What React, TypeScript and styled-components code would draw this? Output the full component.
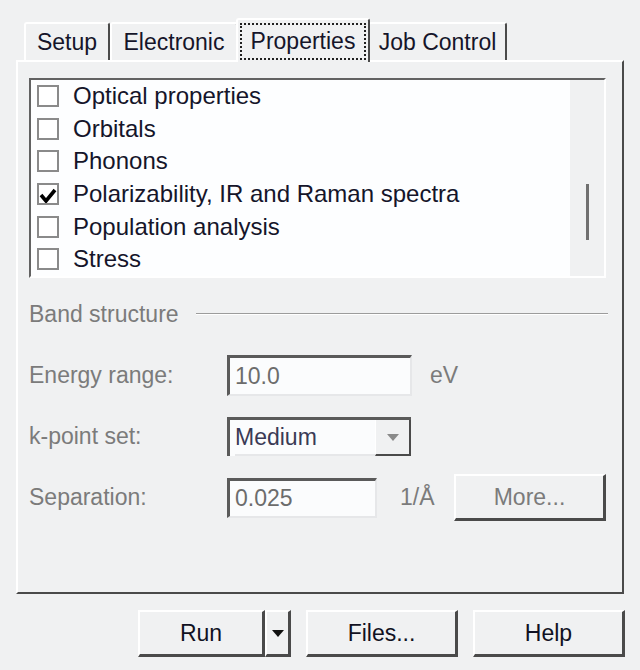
import React from "react";
import styled, { createGlobalStyle } from "styled-components";

const GlobalStyle = createGlobalStyle`
  html, body {
    margin: 0;
    padding: 0;
    background: #f0f0f0;
  }
`;

const dark = "#4a4a4a";
const disabled = "#7b7b7b";

const Window = styled.div`
  width: 640px;
  height: 670px;
  box-sizing: border-box;
  padding: 16px 16px 0 16px;
  background: #f0f1f2;
  display: flex;
  flex-direction: column;
  font-family: "Liberation Sans", Arial, sans-serif;
  color: #15152a;
`;

const TabStrip = styled.div`
  display: flex;
  align-items: flex-end;
  height: 46px;
  padding-left: 8px;
  margin-bottom: -2px;
  position: relative;
  z-index: 1;
`;

const Tab = styled.div<{ $w: number; $active?: boolean }>`
  box-sizing: border-box;
  width: ${(p) => p.$w}px;
  height: ${(p) => (p.$active ? 44 : 38)}px;
  margin: ${(p) => (p.$active ? "0 -2px" : "0 0 2px 0")};
  background: #f0f1f2;
  border-top: 2px solid #ffffff;
  border-left: 2px solid #ffffff;
  border-right: 2px solid ${dark};
  border-radius: 3px 3px 0 0;
  display: flex;
  align-items: ${(p) => (p.$active ? "flex-start" : "center")};
  justify-content: center;
  padding-top: ${(p) => (p.$active ? "3px" : "1px")};
  font-size: 23px;
  position: relative;
  z-index: ${(p) => (p.$active ? 2 : 1)};
`;

const FocusRect = styled.span`
  display: block;
  box-sizing: border-box;
  border: 2px dotted #202020;
  padding: 2px 9px 3px;
  line-height: 28px;
`;

const Panel = styled.div`
  box-sizing: border-box;
  height: 534px;
  border-top: 2px solid #ffffff;
  border-left: 2px solid #ffffff;
  border-right: 2px solid ${dark};
  border-bottom: 2px solid ${dark};
  padding: 16px 16px 0 11px;
  display: flex;
  flex-direction: column;
`;

const ListBox = styled.div`
  box-sizing: border-box;
  height: 200px;
  display: flex;
  background: #fdfeff;
  border-style: solid;
  border-width: 2px;
  border-color: #626262 #ffffff #ffffff #626262;
`;

const List = styled.div`
  flex: 1;
  overflow: hidden;
`;

const Row = styled.div`
  height: 32.6px;
  display: flex;
  align-items: center;
  padding-left: 6px;
  gap: 14px;
  font-size: 24px;
  white-space: nowrap;
`;

const Box = styled.span`
  box-sizing: border-box;
  width: 22px;
  height: 22px;
  border: 2px solid #8a8a8a;
  background: #fff;
  display: flex;
  align-items: flex-end;
  justify-content: center;
  flex-shrink: 0;
`;

const ScrollTrack = styled.div`
  width: 34px;
  background: #f0f1f2;
  display: flex;
  flex-direction: column;
  align-items: center;
  padding-top: 104px;
`;

const Thumb = styled.div`
  width: 3px;
  height: 56px;
  background: #707070;
`;

const GroupHeader = styled.div`
  display: flex;
  align-items: center;
  height: 30px;
  margin-top: 21px;
  margin-right: -2px;
  font-size: 23px;
  color: ${disabled};
`;

const Rule = styled.div`
  flex: 1;
  margin-left: 17px;
  border-top: 1px solid #9c9c9c;
  border-bottom: 1px solid #ffffff;
`;

const Form = styled.div`
  display: flex;
  flex-direction: column;
  gap: 20px;
  margin-top: 26px;
`;

const FormRow = styled.div`
  display: flex;
  align-items: center;
  height: 41px;
`;

const Label = styled.div`
  width: 198px;
  font-size: 23px;
  color: ${disabled};
`;

const Field = styled.div<{ $w: number; $h?: number; $combo?: boolean }>`
  box-sizing: border-box;
  width: ${(p) => p.$w}px;
  height: ${(p) => p.$h ?? 41}px;
  background: #fbfcfd;
  border-style: solid;
  border-width: ${(p) => (p.$combo ? "3px 0 0 3px" : "3px 2px 2px 3px")};
  border-color: #5a5a5a #e6e7e9 #e6e7e9 #5a5a5a;
  display: flex;
  align-items: center;
  padding-left: 5px;
  font-size: 23px;
  color: #6c6c6c;
`;

const ComboText = styled.div`
  flex: 1;
  color: #3a3a55;
  border-bottom: 2px solid #e6e7e9;
  align-self: stretch;
  display: flex;
  align-items: center;
`;

const ComboButton = styled.div`
  box-sizing: border-box;
  width: 36px;
  height: 100%;
  background: #f0f1f2;
  border-style: solid;
  border-width: 0 2px 2px 1px;
  border-color: ${dark} ${dark} ${dark} #ffffff;
  display: flex;
  align-items: center;
  justify-content: center;
`;

const Unit = styled.div<{ $gap: number }>`
  margin-left: ${(p) => p.$gap}px;
  font-size: 23px;
  color: ${disabled};
`;

const Button = styled.button<{ $w: number; $disabled?: boolean }>`
  box-sizing: border-box;
  width: ${(p) => p.$w}px;
  height: 47px;
  padding: 0;
  background: #f0f1f2;
  border-style: solid;
  border-width: 2px 3px 3px 2px;
  border-color: #ffffff ${dark} ${dark} #ffffff;
  border-radius: 0;
  font-family: inherit;
  font-size: 23px;
  color: ${(p) => (p.$disabled ? disabled : "#111122")};
  display: flex;
  align-items: center;
  justify-content: center;
`;

const MoreButton = styled(Button)`
  margin-left: auto;
`;

const ButtonBar = styled.div`
  display: flex;
  justify-content: flex-end;
  gap: 15px;
  margin-top: 16px;
  margin-right: -1px;
`;

const SplitGroup = styled.div`
  display: flex;
`;

const Check = () => (
  <svg width="18" height="16" viewBox="0 0 18 16">
    <path d="M2 8 L7 14 L16 3" fill="none" stroke="#000" strokeWidth="3.6" />
  </svg>
);

const Down = ({ color }: { color: string }) => (
  <svg width="12" height="7" viewBox="0 0 12 7">
    <path d="M0 0 H12 L6 7 Z" fill={color} />
  </svg>
);

const items = [
  { label: "Optical properties", checked: false },
  { label: "Orbitals", checked: false },
  { label: "Phonons", checked: false },
  { label: "Polarizability, IR and Raman spectra", checked: true },
  { label: "Population analysis", checked: false },
  { label: "Stress", checked: false },
];

const App = () => {
  return (
    <Window>
      <GlobalStyle />
      <TabStrip>
        <Tab $w={86}>Setup</Tab>
        <Tab $w={128}>Electronic</Tab>
        <Tab $w={134} $active>
          <FocusRect>Properties</FocusRect>
        </Tab>
        <Tab $w={139}>Job Control</Tab>
      </TabStrip>
      <Panel>
        <ListBox>
          <List>
            {items.map((it) => (
              <Row key={it.label}>
                <Box>{it.checked && <Check />}</Box>
                {it.label}
              </Row>
            ))}
          </List>
          <ScrollTrack>
            <Thumb />
          </ScrollTrack>
        </ListBox>

        <GroupHeader>
          Band structure
          <Rule />
        </GroupHeader>

        <Form>
          <FormRow>
            <Label>Energy range:</Label>
            <Field $w={185}>10.0</Field>
            <Unit $gap={18}>eV</Unit>
          </FormRow>
          <FormRow>
            <Label>k-point set:</Label>
            <Field $w={184} $h={39} $combo>
              <ComboText>Medium</ComboText>
              <ComboButton>
                <Down color="#8a8a8a" />
              </ComboButton>
            </Field>
          </FormRow>
          <FormRow>
            <Label>Separation:</Label>
            <Field $w={150} $h={40}>0.025</Field>
            <Unit $gap={23}>1/Å</Unit>
            <MoreButton $w={152} $disabled>
              More...
            </MoreButton>
          </FormRow>
        </Form>
      </Panel>

      <ButtonBar>
        <SplitGroup>
          <Button $w={127}>Run</Button>
          <Button $w={26}>
            <Down color="#111" />
          </Button>
        </SplitGroup>
        <Button $w={152}>Files...</Button>
        <Button $w={152}>Help</Button>
      </ButtonBar>
    </Window>
  );
};

export default App;
